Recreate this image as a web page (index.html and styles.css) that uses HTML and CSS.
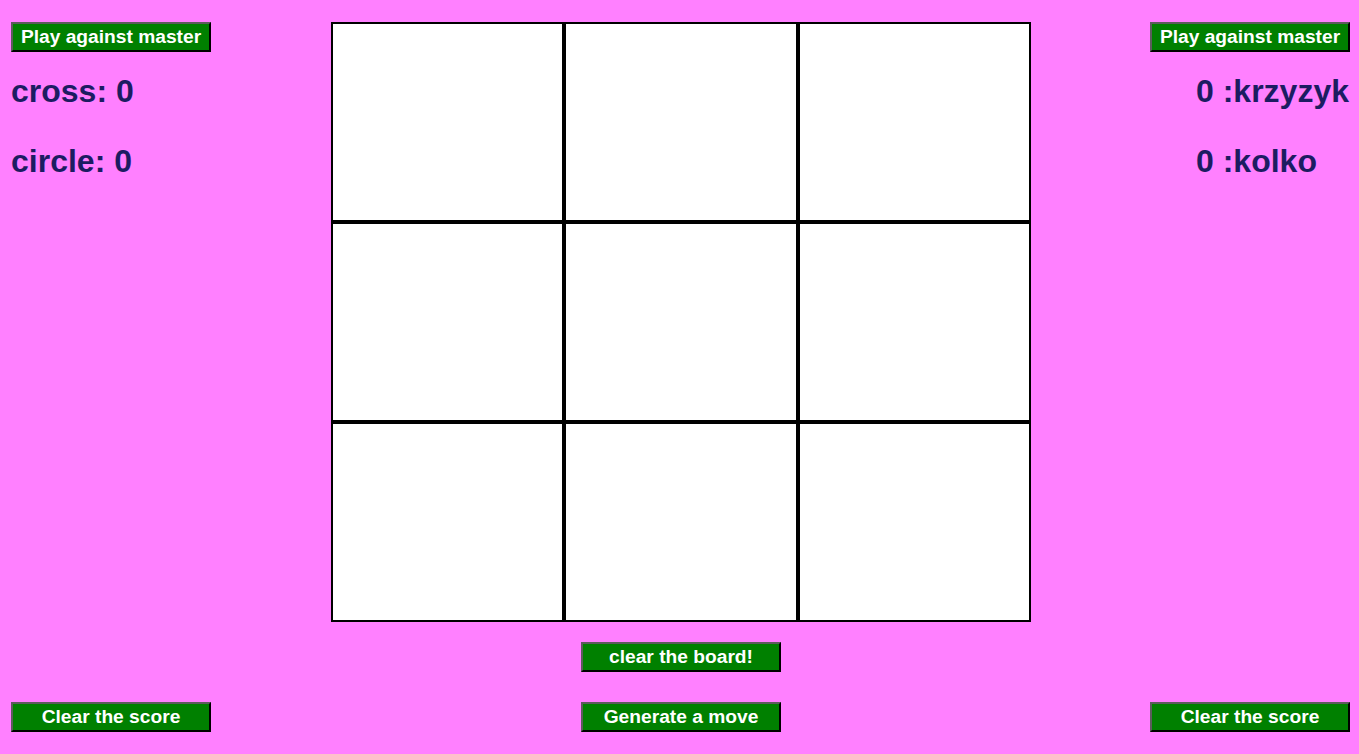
FILE: index.html
```html
<!DOCTYPE html>
<html>
<head>
<meta charset="utf-8">
<title>Tic tac toe</title>
<link rel="stylesheet" href="styles.css">
</head>
<body>
<div class="page">
  <div class="side side-left">
    <button class="btn">Play against master</button>
    <div class="scores">
      <h1 class="score first">cross: 0</h1>
      <h1 class="score second">circle: 0</h1>
    </div>
    <button class="btn bottom">Clear the score</button>
  </div>
  <div class="center">
    <div class="board">
      <div class="cell"></div><div class="cell"></div><div class="cell"></div>
      <div class="cell"></div><div class="cell"></div><div class="cell"></div>
      <div class="cell"></div><div class="cell"></div><div class="cell"></div>
    </div>
    <button class="btn clear-board">clear the board!</button>
    <button class="btn generate">Generate a move</button>
  </div>
  <div class="side side-right">
    <button class="btn">Play against master</button>
    <div class="scores">
      <h1 class="score first">0 :krzyzyk</h1>
      <h1 class="score second">0 :kolko</h1>
    </div>
    <button class="btn bottom">Clear the score</button>
  </div>
</div>
</body>
</html>
```

FILE: styles.css
```css
html, body {
  margin: 0;
  padding: 0;
  background: #ff80ff;
  height: 100%;
}

body {
  font-family: "Liberation Sans", Arial, sans-serif;
}

.page {
  display: flex;
  align-items: stretch;
  padding: 22px 0 0 11px;
}

.side {
  width: 200px;
  display: flex;
  flex-direction: column;
}

.side-left {
  margin-right: 120px;
  align-items: flex-start;
}

.side-right {
  margin-left: 119px;
  align-items: flex-end;
}

.btn {
  display: block;
  box-sizing: border-box;
  width: 200px;
  height: 30px;
  margin: 0;
  padding: 0;
  background: #008000;
  color: #ffffff;
  font-family: "Liberation Sans", Arial, sans-serif;
  font-weight: bold;
  font-size: 19.2px;
  line-height: 26px;
  text-align: center;
  border-style: solid;
  border-width: 2px;
  border-color: #5c5c5c #000000 #000000 #5c5c5c;
  cursor: pointer;
}

.scores {
  display: flex;
  flex-direction: column;
  align-items: flex-start;
}

.side-right .scores {
  margin-right: 1px;
}

.score {
  margin: 0;
  font-size: 32px;
  line-height: 37px;
  font-weight: bold;
  color: #1c1c62;
  white-space: nowrap;
  text-align: left;
}

.score.first {
  margin-top: 21.4px;
}

.score.second {
  margin-top: 32.5px;
}

.bottom {
  margin-top: auto;
}

.center {
  width: 700px;
  display: flex;
  flex-direction: column;
  align-items: center;
}

.board {
  display: grid;
  grid-template-columns: repeat(3, 1fr);
  grid-template-rows: repeat(3, 200px);
  width: 700px;
}

.cell {
  box-sizing: border-box;
  background: #ffffff;
  border: 2px solid #000000;
}

.clear-board {
  margin-top: 20px;
}

.generate {
  margin-top: 30px;
}
```
